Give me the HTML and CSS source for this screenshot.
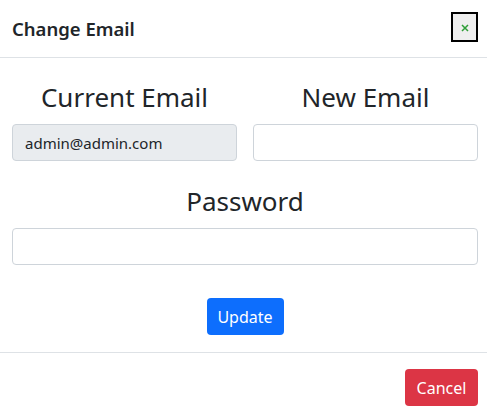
FILE: index.html
```html
<!DOCTYPE html>
<html>
<head>
<meta charset="utf-8">
<link rel="stylesheet" href="styles.css">
</head>
<body>
<div class="modal">
  <div class="modal-header">
    <div class="modal-title">Change Email</div>
    <button class="close-btn" aria-label="Close"><svg width="8" height="8" viewBox="0 0 8 8"><path d="M1 1L7 7M7 1L1 7" stroke="#2f9e37" stroke-width="1.5" fill="none"/></svg></button>
  </div>
  <div class="modal-body">
    <div class="row">
      <div class="group">
        <label class="big-label">Current Email</label>
        <input class="field disabled" type="text" value="admin@admin.com" disabled>
      </div>
      <div class="group">
        <label class="big-label">New Email</label>
        <input class="field" type="text">
      </div>
    </div>
    <div class="group full">
      <label class="big-label">Password</label>
      <input class="field" type="password">
    </div>
    <div class="actions">
      <button class="btn btn-primary">Update</button>
    </div>
  </div>
  <div class="modal-footer">
    <button class="btn btn-danger">Cancel</button>
  </div>
</div>
</body>
</html>
```
FILE: styles.css
```css
* { box-sizing: border-box; }
html, body { margin: 0; padding: 0; background: #fff; }
body {
  font-family: "Noto Sans", "Open Sans", sans-serif;
  color: #212529;
}
.modal { width: 487px; }
.modal-header {
  height: 58px;
  display: flex;
  align-items: center;
  justify-content: space-between;
  padding: 0 9px 0 12px;
  border-bottom: 1px solid #dee2e6;
}
.modal-title {
  font-size: 18.5px;
  font-weight: 600;
  color: #212529;
}
.close-btn {
  width: 27px;
  height: 30px;
  margin-top: -4px;
  border: 2px solid #000;
  background: #efefef;
  display: flex;
  align-items: center;
  justify-content: center;
  padding: 2px 0 0;
}
.close-btn svg { display: block; }
.modal-body {
  padding: 22px 9px 0 12px;
}
.row {
  display: grid;
  grid-template-columns: 1fr 1fr;
  gap: 16px;
}
.group {
  display: flex;
  flex-direction: column;
}
.full { margin-top: 23px; }
.big-label {
  display: block;
  text-align: center;
  font-size: 26px;
  line-height: 34px;
  font-weight: 400;
  margin-bottom: 10px;
}
.field {
  height: 37px;
  border: 1px solid #ced4da;
  border-radius: 4px;
  padding: 0 12px;
  font-family: "Noto Sans", sans-serif;
  font-size: 15px;
  color: #212529;
  background: #fff;
  width: 100%;
}
.field.disabled { background: #e9ecef; }
.actions {
  display: flex;
  justify-content: center;
  padding: 33px 0 17px;
}
.btn {
  height: 37px;
  border: none;
  border-radius: 4px;
  color: #fff;
  font-family: "Noto Sans", sans-serif;
  font-size: 16px;
  padding: 0;
}
.btn-primary { background: #0d6efd; width: 77px; }
.btn-danger { background: #dc3545; width: 73px; }
.modal-footer {
  border-top: 1px solid #dee2e6;
  display: flex;
  justify-content: flex-end;
  padding: 16px 9px 0 12px;
}
```
